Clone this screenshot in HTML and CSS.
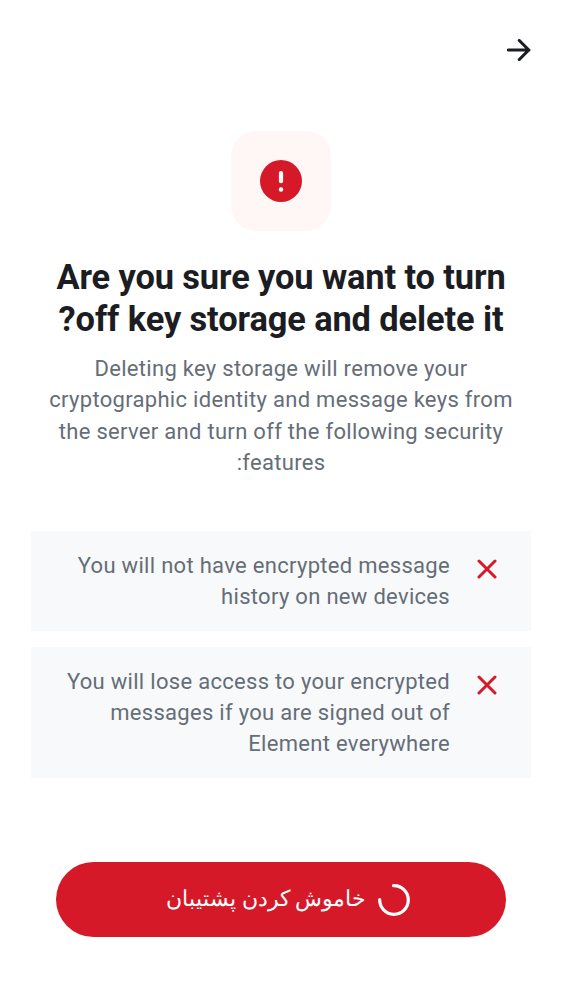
FILE: index.html
```
<!DOCTYPE html>
<html lang="fa" dir="rtl">
<head>
<meta charset="utf-8">
<title>Key storage</title>
<link rel="stylesheet" href="styles.css">
</head>
<body>
<main class="screen">
  <header class="topbar">
    <svg class="back" viewBox="0 0 24 22" aria-hidden="true"><path d="M1.200 11H22M12.300 1.500L21.800 11L12.300 20.500"/></svg>
  </header>
  <section class="hero">
    <div class="badge">
      <svg class="alert" viewBox="0 0 42 42" aria-hidden="true"><circle cx="21" cy="21" r="21"/><path d="M21 13V21.200"/><circle class="dot" cx="21" cy="29.500" r="2.200"/></svg>
    </div>
    <h1 class="title">Are you sure you want to turn<br>off key storage and delete it?</h1>
    <p class="subtitle">Deleting key storage will remove your<br>cryptographic identity and message keys from<br>the server and turn off the following security<br>features:</p>
  </section>
  <ul class="list">
    <li class="item">
      <svg class="cross" viewBox="0 0 20 20" aria-hidden="true"><path d="M2 2L18 18M18 2L2 18"/></svg>
      <p class="text">You will not have encrypted message<br>history on new devices</p>
    </li>
    <li class="item">
      <svg class="cross" viewBox="0 0 20 20" aria-hidden="true"><path d="M2 2L18 18M18 2L2 18"/></svg>
      <p class="text">You will lose access to your encrypted<br>messages if you are signed out of<br>Element everywhere</p>
    </li>
  </ul>
  <button class="confirm">
    <svg class="spinner" viewBox="0 0 32 32" aria-hidden="true"><path d="M15.500 1.700A14.300 14.300 0 1 1 1.700 15.500"/></svg>
    <span class="label">خاموش کردن پشتیبان</span>
  </button>
</main>
</body>
</html>
```
FILE: styles.css
```
* { box-sizing: border-box; }
body { margin: 0; background: #fff; font-family: Roboto, "Noto Sans", sans-serif; }
.screen { width: 562px; height: 1000px; display: flex; flex-direction: column; overflow: hidden; }
.topbar { height: 100px; padding: 39px 31px 0; flex: none; }
.back { display: block; width: 24px; height: 22px; fill: none; stroke: #1b1d22; stroke-width: 3.1; stroke-linecap: round; stroke-linejoin: round; }
.hero { padding-top: 31px; display: flex; flex-direction: column; align-items: center; text-align: center; }
.badge { width: 100px; height: 100px; border-radius: 25px; background: #fff7f6; display: grid; place-items: center; }
.alert { width: 42px; height: 42px; fill: #d51928; }
.alert path { stroke: #fff; stroke-width: 4.2; stroke-linecap: round; }
.alert .dot { fill: #fff; }
.title { margin: 25px 0 0; font-size: 34.4px; line-height: 42px; font-weight: 700; letter-spacing: -.11px; color: #1b1d22; white-space: nowrap; }
.subtitle { margin: 13px 0 0; font-size: 22px; line-height: 31.25px; letter-spacing: .3px; color: #656d77; white-space: nowrap; }
.list { list-style: none; margin: 53px 31px 0; padding: 0; display: flex; flex-direction: column; gap: 16px; }
.item { background: #f7f9fb; padding: 18.500px 34px 19px; display: flex; gap: 27px; }
.cross { flex: none; width: 20px; height: 20px; margin-top: 9px; fill: none; stroke: #d51928; stroke-width: 3; stroke-linecap: round; }
.text { margin: 0; font-size: 22px; line-height: 31.25px; letter-spacing: .3px; color: #656d77; white-space: nowrap; }
.confirm { margin: 84px 56px 0; height: 75px; border: 0; border-radius: 38px; background: #d51928; color: #fff; font: 400 22px/31px Roboto, "Noto Sans", sans-serif; display: flex; align-items: center; justify-content: flex-start; padding: 0 96px; gap: 12px; }
.label { padding-bottom: 2px; }
.spinner { width: 32px; height: 32px; fill: none; stroke: #fff; stroke-width: 3.2; stroke-linecap: round; }
```
